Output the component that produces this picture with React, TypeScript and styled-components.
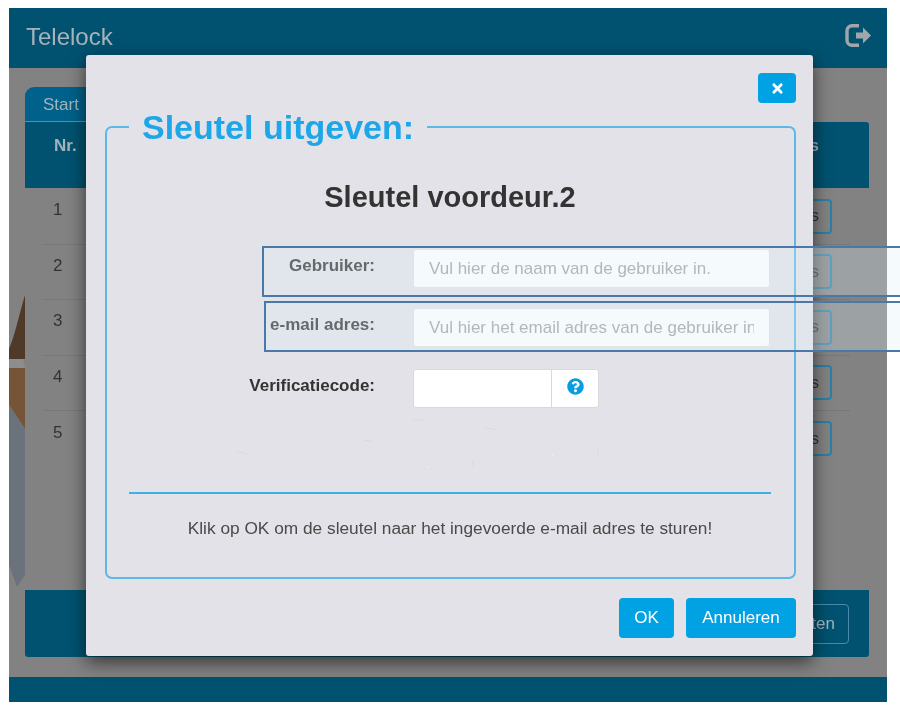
import styled, { createGlobalStyle } from "styled-components";
import { FaTimes, FaQuestionCircle } from "react-icons/fa";

const rows = [1, 2, 3, 4, 5];

export default function App() {
    return (
        <Root>
            <GlobalStyle />
            <Frame>
                <Header>
                    <Brand>Telelock</Brand>
                    <LogoutIcon viewBox="0 0 26 23" width="26" height="23" aria-hidden="true">
                        <path d="M14 1.8 H7 a5 5 0 0 0 -5 5 V16.2 a5 5 0 0 0 5 5 H14" fill="none" stroke="currentColor" strokeWidth="3.4" />
                        <path d="M11 8.5 H18 V3.5 L26 11.5 L18 19.5 V14.5 H11 Z" fill="currentColor" />
                    </LogoutIcon>
                </Header>
                <Main>
                    <Photo viewBox="0 0 16 320" width="16" height="320" aria-hidden="true">
                        <path d="M16 0 C10 20 6 40 0 54 L0 64 L16 64 Z" fill="#4f3a2a" />
                        <path d="M0 64 H14 L16 73 H0 Z" fill="#8e8d8b" />
                        <path d="M0 73 H16 V134 L0 110 Z" fill="#755437" />
                        <path d="M0 110 L16 134 V280 L8 292 L0 270 Z" fill="#6c727b" />
                    </Photo>
                    <Panel>
                        <Tab>Start</Tab>
                        <TableHead>
                            <span>Nr.</span>
                            <span>Acties</span>
                        </TableHead>
                        <TableBody>
                            {rows.map((nr) => (
                                <Row key={nr}>
                                    <span>{nr}</span>
                                    <RowButton>Details</RowButton>
                                </Row>
                            ))}
                        </TableBody>
                        <Band>
                            <BandButton>Sluiten</BandButton>
                        </Band>
                    </Panel>
                </Main>
                <Footer />
                <Modal>
                    <CloseBar>
                        <CloseButton aria-label="Sluiten">
                            <FaTimes size={15} />
                        </CloseButton>
                    </CloseBar>
                    <Fieldset>
                        <Legend>Sleutel uitgeven:</Legend>
                        <KeyName>Sleutel voordeur.2</KeyName>
                        <FormRow>
                            <Label>Gebruiker:</Label>
                            <Input placeholder="Vul hier de naam van de gebruiker in." />
                        </FormRow>
                        <FormRow $gap={22}>
                            <Label>e-mail adres:</Label>
                            <Input placeholder="Vul hier het email adres van de gebruiker in." />
                        </FormRow>
                        <FormRow>
                            <Label>Verificatiecode:</Label>
                            <InputGroup>
                                <CodeInput />
                                <Addon>
                                    <FaQuestionCircle size={17} />
                                </Addon>
                            </InputGroup>
                        </FormRow>
                        <Specks viewBox="0 0 400 70" width="400" height="70" aria-hidden="true">
                            <g fill="none" stroke="#dadade" strokeWidth="1">
                                <path d="M17 43 Q22 41 27 44" />
                                <path d="M143 31 Q148 29 153 32" />
                                <path d="M265 19 Q271 17 277 20" />
                                <path d="M193 10 H205" />
                                <path d="M253 49 V57" />
                                <path d="M378 36 V45" />
                                <path d="M258 52 H276" stroke="#dfdfe3" />
                            </g>
                            <circle cx="333" cy="45" r="1" fill="#ecedf0" />
                            <circle cx="208" cy="57" r="1" fill="#ecedf0" />
                        </Specks>
                        <Rule />
                        <Hint>Klik op OK om de sleutel naar het ingevoerde e-mail adres te sturen!</Hint>
                    </Fieldset>
                    <Actions>
                        <PrimaryButton $width={55}>OK</PrimaryButton>
                        <PrimaryButton $width={110}>Annuleren</PrimaryButton>
                    </Actions>
                </Modal>
            </Frame>
            <Highlight $left={262} $top={246} />
            <Highlight $left={264} $top={301} />
        </Root>
    );
}

const GlobalStyle = createGlobalStyle`
    * {
        box-sizing: border-box;
    }

    body {
        margin: 0;
        background-color: #FFFFFF;
        font-family: "Liberation Sans", Arial, sans-serif;
        font-size: 17px;
        color: #333333;
    }
`;

const Root = styled.div`
    position: relative;
    width: 900px;
    height: 720px;
    padding: 8px 0 0 9px;
    overflow: hidden;
    filter: blur(0.5px);
`;

const Frame = styled.div`
    position: relative;
    display: flex;
    flex-direction: column;
    width: 878px;
    height: 694px;
    background-color: #828282;
`;

const Header = styled.header`
    display: flex;
    align-items: center;
    justify-content: space-between;
    height: 60px;
    padding: 0 16px 0 17px;
    background-color: #005270;
    color: #a8b3b9;
`;

const Brand = styled.span`
    font-size: 24px;
    margin-top: -2px;
`;

const LogoutIcon = styled.svg`
    margin-top: -6px;
    color: #a2a6a8;
`;

const Main = styled.main`
    position: relative;
    flex: 1;
    display: flex;
    padding: 19px 18px 20px 16px;
`;

const Photo = styled.svg`
    position: absolute;
    left: 0;
    top: 227px;
`;

const Panel = styled.div`
    position: relative;
    flex: 1;
    display: flex;
    flex-direction: column;
`;

const Tab = styled.div`
    width: 90px;
    height: 34px;
    margin-bottom: 1px;
    padding: 8px 0 0 18px;
    border-radius: 9px 0 0 0;
    background-color: #00618a;
    color: #a3b3bc;
`;

const TableHead = styled.div`
    display: flex;
    justify-content: space-between;
    height: 66px;
    padding: 14px 50px 0 29px;
    border-radius: 0 3px 0 0;
    background-color: #005270;
    color: #a3b3bc;
    font-weight: 700;
`;

const TableBody = styled.div`
    display: flex;
    flex-direction: column;
    padding: 1px 19px 0;
`;

const Row = styled.div`
    display: flex;
    align-items: center;
    justify-content: space-between;
    height: 55.5px;
    padding: 0 18px 0 9px;
    border-bottom: 1px solid #777777;

    &:last-child {
        border-bottom: none;
    }

    span {
        margin-top: -12px;
    }
`;

const RowButton = styled.button`
    height: 35px;
    padding: 0 11px;
    border: 2px solid #2b7fa6;
    border-radius: 4px;
    background: none;
    color: #333333;
    font-family: inherit;
    font-size: 17px;
`;

const Band = styled.div`
    display: flex;
    align-items: center;
    justify-content: flex-end;
    height: 67px;
    margin-top: auto;
    padding: 0 20px 0 0;
    border-radius: 0 0 3px 3px;
    background-color: #005270;
`;

const BandButton = styled.button`
    height: 40px;
    padding: 0 13px;
    border: 1px solid #4a8aa8;
    border-radius: 4px;
    background: none;
    color: #a3b3bc;
    font-family: inherit;
    font-size: 17px;
`;

const Footer = styled.footer`
    height: 25px;
    background-color: #005270;
`;

const Modal = styled.div`
    position: absolute;
    left: 77px;
    top: 47px;
    display: flex;
    flex-direction: column;
    width: 727px;
    height: 601px;
    padding: 18px 17px 0 19px;
    border-radius: 3px;
    background-color: #e3e2e8;
    box-shadow: 0 6px 18px rgba(0, 0, 0, 0.6);
`;

const CloseBar = styled.div`
    display: flex;
    justify-content: flex-end;
    margin-bottom: 5px;
`;

const CloseButton = styled.button`
    display: flex;
    align-items: center;
    justify-content: center;
    width: 38px;
    height: 30px;
    padding: 0;
    border: none;
    border-radius: 4px;
    background-color: #00a2e3;
    color: #FFFFFF;
`;

const Fieldset = styled.fieldset`
    height: 471px;
    margin: 0;
    padding: 0 23px 0 22px;
    border: 2px solid #5cb9e6;
    border-radius: 7px;
    min-width: 0;
`;

const Legend = styled.legend`
    padding: 0 13px;
    color: #1ea7e8;
    font-size: 34px;
    font-weight: 700;
    line-height: 38px;
`;

const KeyName = styled.h2`
    margin: 34px 0 35px;
    color: #333333;
    font-size: 29px;
    font-weight: 700;
    line-height: 34px;
    text-align: center;
`;

const FormRow = styled.div<{ $gap?: number }>`
    display: flex;
    gap: 38px;
    margin-bottom: ${(p) => p.$gap ?? 20}px;
`;

const Label = styled.label`
    width: 246px;
    padding-top: 7px;
    color: #333333;
    font-weight: 700;
    text-align: right;
`;

const Input = styled.input`
    width: 357px;
    height: 39px;
    padding: 0 15px;
    border: 1px solid #e0e0e0;
    border-radius: 3px;
    background-color: #FFFFFF;
    font-family: inherit;
    font-size: 17px;

    &::placeholder {
        color: #a2a2a2;
    }
`;

const InputGroup = styled.div`
    display: flex;
    width: 186px;
    height: 39px;
    border: 1px solid #d9d9d9;
    border-radius: 3px;
    background-color: #FFFFFF;
`;

const CodeInput = styled.input`
    width: 138px;
    border: none;
    border-right: 1px solid #d9d9d9;
    background: none;
`;

const Addon = styled.span`
    flex: 1;
    display: flex;
    align-items: center;
    justify-content: center;
    padding-bottom: 4px;
    color: #0a9be0;
`;

const Specks = styled.svg`
    display: block;
    margin: -18px 0 12px 91px;
`;

const Rule = styled.hr`
    height: 2px;
    margin: 0;
    border: none;
    background-color: #3fb0e4;
`;

const Hint = styled.p`
    margin: 24px 0 0;
    color: #4a4a4a;
    font-size: 17.3px;
    line-height: 20px;
    text-align: center;
`;

const Actions = styled.div`
    display: flex;
    justify-content: flex-end;
    gap: 12px;
    margin-top: 19px;
`;

const PrimaryButton = styled.button<{ $width: number }>`
    width: ${(p) => p.$width}px;
    height: 40px;
    padding: 0;
    border: none;
    border-radius: 4px;
    background-color: #00a2e3;
    color: #FFFFFF;
    font-family: inherit;
    font-size: 17px;
`;

const Highlight = styled.div<{ $left: number; $top: number }>`
    position: absolute;
    left: ${(p) => p.$left}px;
    top: ${(p) => p.$top}px;
    width: 680px;
    height: 51px;
    border: 2px solid #4a78a8;
    background-color: rgba(220, 237, 248, 0.29);
`;
